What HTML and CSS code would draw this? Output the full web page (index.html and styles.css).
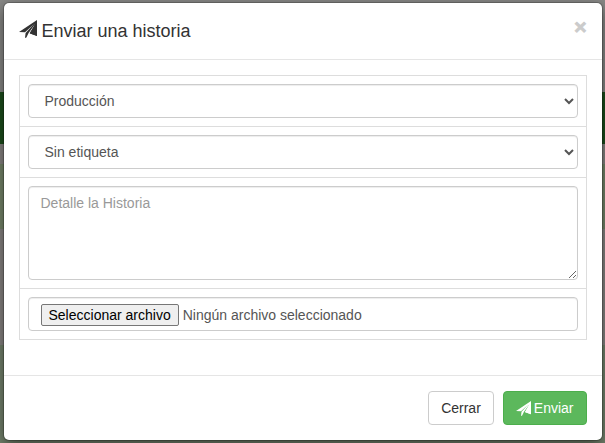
FILE: index.html
```html
<!DOCTYPE html>
<html lang="es">

<head>
    <meta charset="UTF-8">
    <meta name="viewport" content="width=device-width, initial-scale=1.0">
    <title>Enviar una historia</title>
    <link rel="stylesheet" href="styles.css">
</head>

<body>
    <svg class="sprite" width="0" height="0" aria-hidden="true">
        <symbol id="icon-send" viewBox="0 0 18 18">
            <path d="M18 0 L0 12 L6 12.2 L15 4 L6.6 13 L6 18 L7.4 17.4 L9.6 13 L16.4 3.6 L11 13.4 L18 16 Z" />
            <path d="M18 1 L10.6 13.2 L18 16 Z" />
        </symbol>
    </svg>
    <div class="modal" role="dialog" aria-labelledby="modal-title">
        <form class="modal-content" onsubmit="return false">
            <div class="modal-header">
                <h4 class="modal-title" id="modal-title">
                    <svg class="icon icon-title"><use href="#icon-send" /></svg>
                    Enviar una historia
                </h4>
                <button type="button" class="close" aria-label="Cerrar ventana">&times;</button>
            </div>
            <div class="modal-body">
                <div class="fields">
                    <div class="field">
                        <select class="form-control" name="area" aria-label="Área">
                            <option>Producción</option>
                        </select>
                    </div>
                    <div class="field">
                        <select class="form-control" name="etiqueta" aria-label="Etiqueta">
                            <option>Sin etiqueta</option>
                        </select>
                    </div>
                    <div class="field">
                        <textarea class="form-control" name="detalle" rows="4" placeholder="Detalle la Historia" aria-label="Detalle la Historia"></textarea>
                    </div>
                    <div class="field">
                        <label class="form-control file" for="archivo">
                            <input type="file" class="file-input" id="archivo" name="archivo">
                            <span class="file-button">Seleccionar archivo</span>
                            <span class="file-name" id="file-name">Ningún archivo seleccionado</span>
                        </label>
                    </div>
                </div>
            </div>
            <div class="modal-footer">
                <button type="button" class="btn btn-default">Cerrar</button>
                <button type="submit" class="btn btn-success">
                    <svg class="icon"><use href="#icon-send" /></svg>
                    Enviar
                </button>
            </div>
        </form>
    </div>
    <script>
        const fileInput = document.getElementById("archivo");
        fileInput.addEventListener("change", function () {
            const file = fileInput.files[0];
            document.getElementById("file-name").textContent = file ? file.name : "Ningún archivo seleccionado";
        });
    </script>
</body>

</html>
```
FILE: styles.css
```css
* {
    box-sizing: border-box;
}

body {
    margin: 0;
    min-height: 100vh;
    padding: 2px;
    overflow: hidden;
    font-family: "Liberation Sans", Arial, sans-serif;
    font-size: 14px;
    line-height: 20px;
    color: #333;
    background: linear-gradient(#8a8a88 92px, #1c4f1c 92px, #1c4f1c 144px, #8a8785 144px, #8a8785 164px, #78886c 164px, #78886c 229px, #8a8785 229px, #8a8785 345px, #76856f 345px);
}

.sprite {
    display: block;
}

.modal {
    max-width: 600px;
    margin: 0 auto;
}

.modal-content {
    background-color: #fff;
    background-clip: padding-box;
    border: 1px solid rgba(0, 0, 0, 0.2);
    border-radius: 6px;
    box-shadow: 0 5px 15px rgba(0, 0, 0, 0.5);
}

.modal-header {
    display: flex;
    justify-content: space-between;
    align-items: flex-start;
    padding: 15px;
    border-bottom: 1px solid #e5e5e5;
}

.modal-title {
    display: flex;
    align-items: center;
    gap: 5px;
    margin: 0;
    font-size: 18px;
    font-weight: 500;
    line-height: 26px;
}

.icon {
    width: 15px;
    height: 15px;
    fill: currentColor;
}

.icon-title {
    width: 18px;
    height: 18px;
    margin-bottom: 4px;
}

.close {
    padding: 0;
    border: 0;
    margin-top: -2px;
    background: transparent;
    color: #000;
    font-family: inherit;
    font-size: 21px;
    font-weight: bold;
    line-height: 21px;
    -webkit-text-stroke: 1px #000;
    opacity: 0.2;
    cursor: pointer;
}

.modal-body {
    padding: 15px;
}

.fields {
    margin-bottom: 20px;
    border: 1px solid #ddd;
}

.field {
    padding: 8px;
}

.field + .field {
    border-top: 1px solid #ddd;
}

.form-control {
    display: block;
    width: 100%;
    height: 34px;
    padding: 6px 12px;
    border: 1px solid #ccc;
    border-radius: 4px;
    background-color: #fff;
    box-shadow: inset 0 1px 1px rgba(0, 0, 0, 0.075);
    color: #555;
    font-family: inherit;
    font-size: 14px;
    line-height: 20px;
}

textarea.form-control {
    height: auto;
    resize: vertical;
}

.form-control::placeholder {
    color: #999;
}

.file {
    display: flex;
    align-items: center;
    gap: 4px;
    padding: 8px 12px 6px;
}

.file-input {
    position: absolute;
    width: 1px;
    height: 1px;
    opacity: 0;
}

.file-button {
    padding: 0 7px;
    border: 1px solid #767676;
    border-radius: 2px;
    background-color: #efefef;
    color: #000;
}

.modal-footer {
    display: flex;
    justify-content: flex-end;
    gap: 9px;
    padding: 15px;
    border-top: 1px solid #e5e5e5;
}

.btn {
    display: flex;
    align-items: center;
    padding: 6px 12px;
    border: 1px solid transparent;
    border-radius: 4px;
    font-family: inherit;
    font-size: 14px;
    line-height: 20px;
    cursor: pointer;
}

.btn-default {
    border-color: #ccc;
    background-color: #fff;
    color: #333;
}

.btn-success {
    gap: 3px;
    border-color: #4cae4c;
    background-color: #5cb85c;
    color: #fff;
}
```
